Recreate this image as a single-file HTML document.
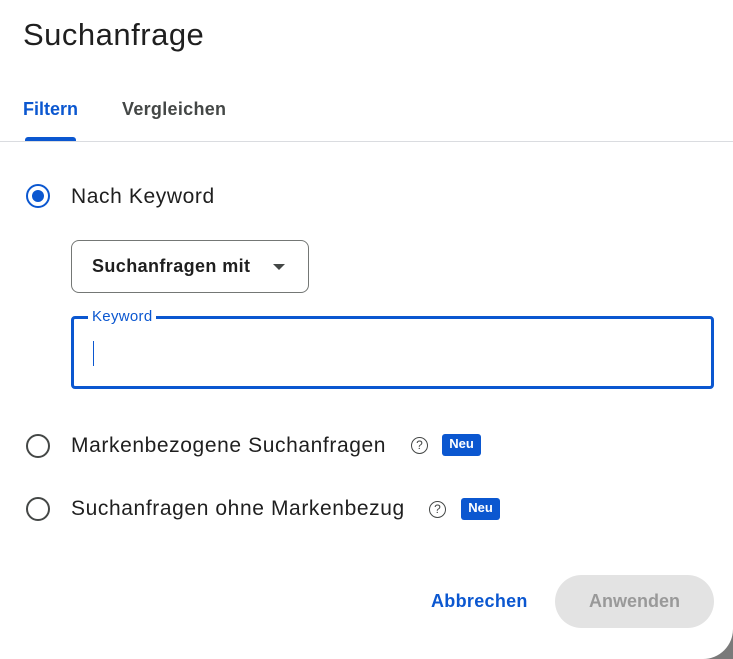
<!DOCTYPE html>
<html><head><meta charset="utf-8"><style>
html,body{margin:0;padding:0;width:733px;height:659px;overflow:hidden;background:#7a7a7a;font-family:"Liberation Sans",Arial,sans-serif;}
.d{position:absolute;left:-20px;top:-20px;width:753px;height:679px;background:#fff;border-bottom-right-radius:30px;}
.a{position:absolute;white-space:nowrap;}
.radio{position:absolute;width:24px;height:24px;box-sizing:border-box;border:2px solid #444746;border-radius:50%;}
.help{position:absolute;width:17px;height:17px;box-sizing:border-box;border:1.5px solid #444746;border-radius:50%;font-size:12px;line-height:14px;text-align:center;color:#444746;}
.neu{position:absolute;height:22px;width:39px;background:#0b57d0;color:#fff;border-radius:3px;font-size:13px;font-weight:bold;text-align:center;line-height:20px;}
.t{font-size:21px;color:#1f1f1f;letter-spacing:0.6px;}
</style></head><body>
<div class="d"></div>
<div class="a" style="left:23px;top:17px;font-size:31px;color:#1f1f1f;letter-spacing:0.5px;">Suchanfrage</div>
<div class="a" style="left:23px;top:99px;font-size:18px;color:#0b57d0;font-weight:bold;">Filtern</div>
<div class="a" style="left:122px;top:99px;font-size:18px;color:#444746;font-weight:bold;letter-spacing:0.3px;">Vergleichen</div>
<div class="a" style="left:25px;top:137px;width:51px;height:4px;background:#0b57d0;border-radius:3px 3px 0 0;"></div>
<div class="a" style="left:0;top:141px;width:733px;height:1px;background:#dadce0;"></div>

<div class="radio" style="left:26px;top:184px;border-color:#0b57d0;"><div style="position:absolute;left:4px;top:4px;width:12px;height:12px;border-radius:50%;background:#0b57d0;"></div></div>
<div class="a t" style="left:71px;top:185px;">Nach Keyword</div>

<div class="a" style="left:71px;top:240px;width:238px;height:53px;box-sizing:border-box;border:1px solid #747775;border-radius:8px;"></div>
<div class="a" style="left:92px;top:256px;font-size:18px;color:#1f1f1f;font-weight:bold;letter-spacing:0.4px;">Suchanfragen mit</div>
<div class="a" style="left:273px;top:264px;width:0;height:0;border-left:6px solid transparent;border-right:6px solid transparent;border-top:6px solid #444746;"></div>

<div class="a" style="left:71px;top:316px;width:643px;height:73px;box-sizing:border-box;border:3px solid #0b57d0;border-radius:4px;"></div>
<div class="a" style="left:88px;top:308px;padding:0 4px;background:#fff;font-size:15px;color:#0b57d0;letter-spacing:0.3px;">Keyword</div>
<div class="a" style="left:93px;top:341px;width:1px;height:25px;background:#0b57d0;"></div>

<div class="radio" style="left:26px;top:434px;"></div>
<div class="a t" style="left:71px;top:434px;">Markenbezogene Suchanfragen</div>
<div class="help" style="left:411px;top:437px;">?</div>
<div class="neu" style="left:442px;top:434px;">Neu</div>

<div class="radio" style="left:26px;top:497px;"></div>
<div class="a t" style="left:71px;top:497px;">Suchanfragen ohne Markenbezug</div>
<div class="help" style="left:429px;top:501px;">?</div>
<div class="neu" style="left:461px;top:498px;">Neu</div>

<div class="a" style="left:431px;top:591px;font-size:18px;color:#0b57d0;font-weight:bold;letter-spacing:0.3px;">Abbrechen</div>
<div class="a" style="left:555px;top:575px;width:159px;height:53px;background:#e3e3e3;border-radius:27px;text-align:center;line-height:53px;font-size:18px;color:#999;font-weight:bold;">Anwenden</div>
</body></html>
